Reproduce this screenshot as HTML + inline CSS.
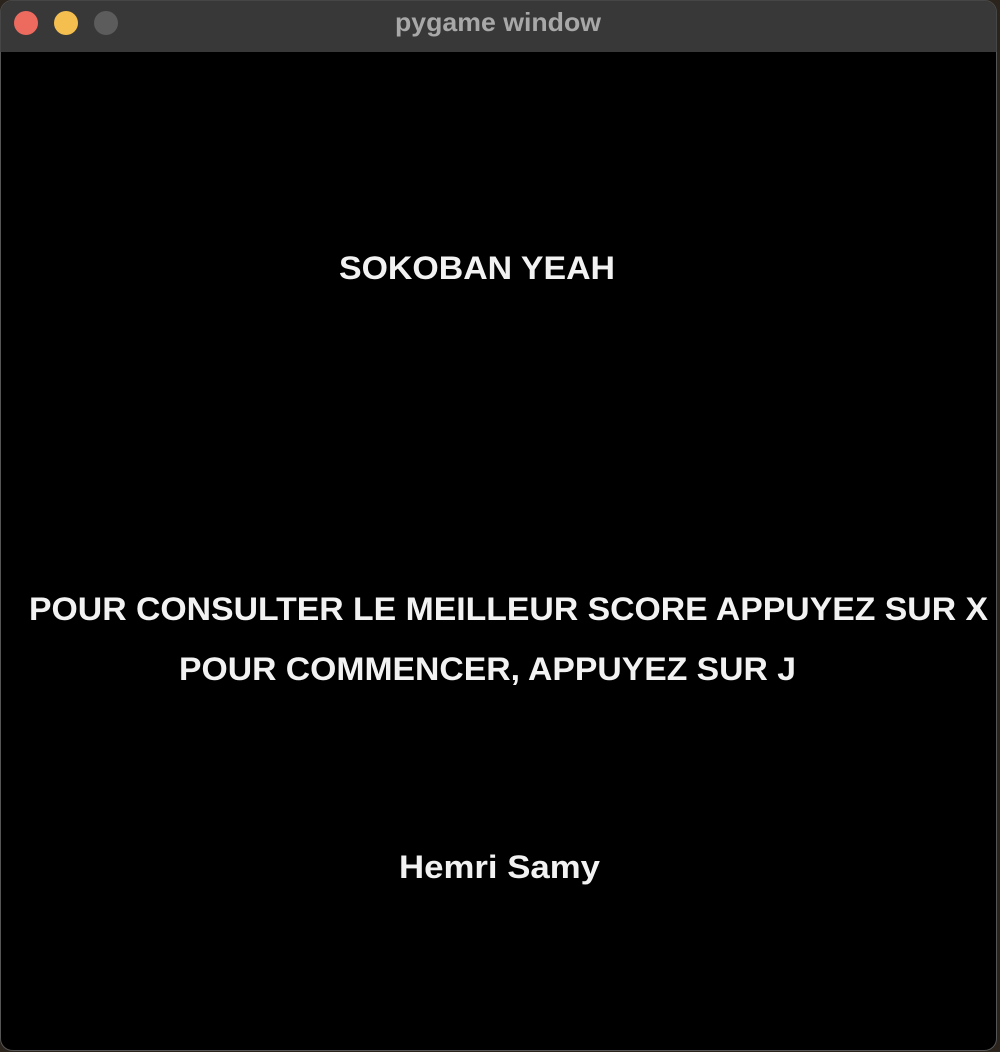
<!DOCTYPE html>
<html><head><meta charset="utf-8"><style>
html,body{margin:0;padding:0;background:#3a3228;}
body{width:1000px;height:1052px;overflow:hidden;}
</style></head><body>
<svg width="1000" height="1052" xmlns="http://www.w3.org/2000/svg" style="display:block">
<rect x="0" y="0" width="1000" height="1052" fill="#2a241c"/>
<rect x="0.5" y="0.5" width="996" height="1050" rx="12" fill="#000" stroke="#555" stroke-width="1"/>
<path d="M0.5 52 V12.5 A12 12 0 0 1 12.5 0.5 H984.5 A12 12 0 0 1 996.5 12.5 V52 Z" fill="#383838"/>
<circle cx="26" cy="23" r="12" fill="#ed6a5e"/>
<circle cx="66" cy="23" r="12" fill="#f5bf4f"/>
<circle cx="106" cy="23" r="12" fill="#5c5c5c"/>
<text x="395" y="31" textLength="206" lengthAdjust="spacingAndGlyphs" font-family="Liberation Sans, sans-serif" font-weight="bold" font-size="26" fill="#a8a8a8">pygame window</text>
<g font-family="Liberation Sans, sans-serif" font-weight="bold" font-size="32" fill="#f2f2f2">
<text x="339" y="279" textLength="276" lengthAdjust="spacingAndGlyphs">SOKOBAN YEAH</text>
<text x="29" y="620" textLength="959" lengthAdjust="spacingAndGlyphs">POUR CONSULTER LE MEILLEUR SCORE APPUYEZ SUR X</text>
<text x="179" y="680" textLength="617" lengthAdjust="spacingAndGlyphs">POUR COMMENCER, APPUYEZ SUR J</text>
<text x="399" y="878" textLength="201" lengthAdjust="spacingAndGlyphs">Hemri Samy</text>
</g>
</svg>
</body></html>
